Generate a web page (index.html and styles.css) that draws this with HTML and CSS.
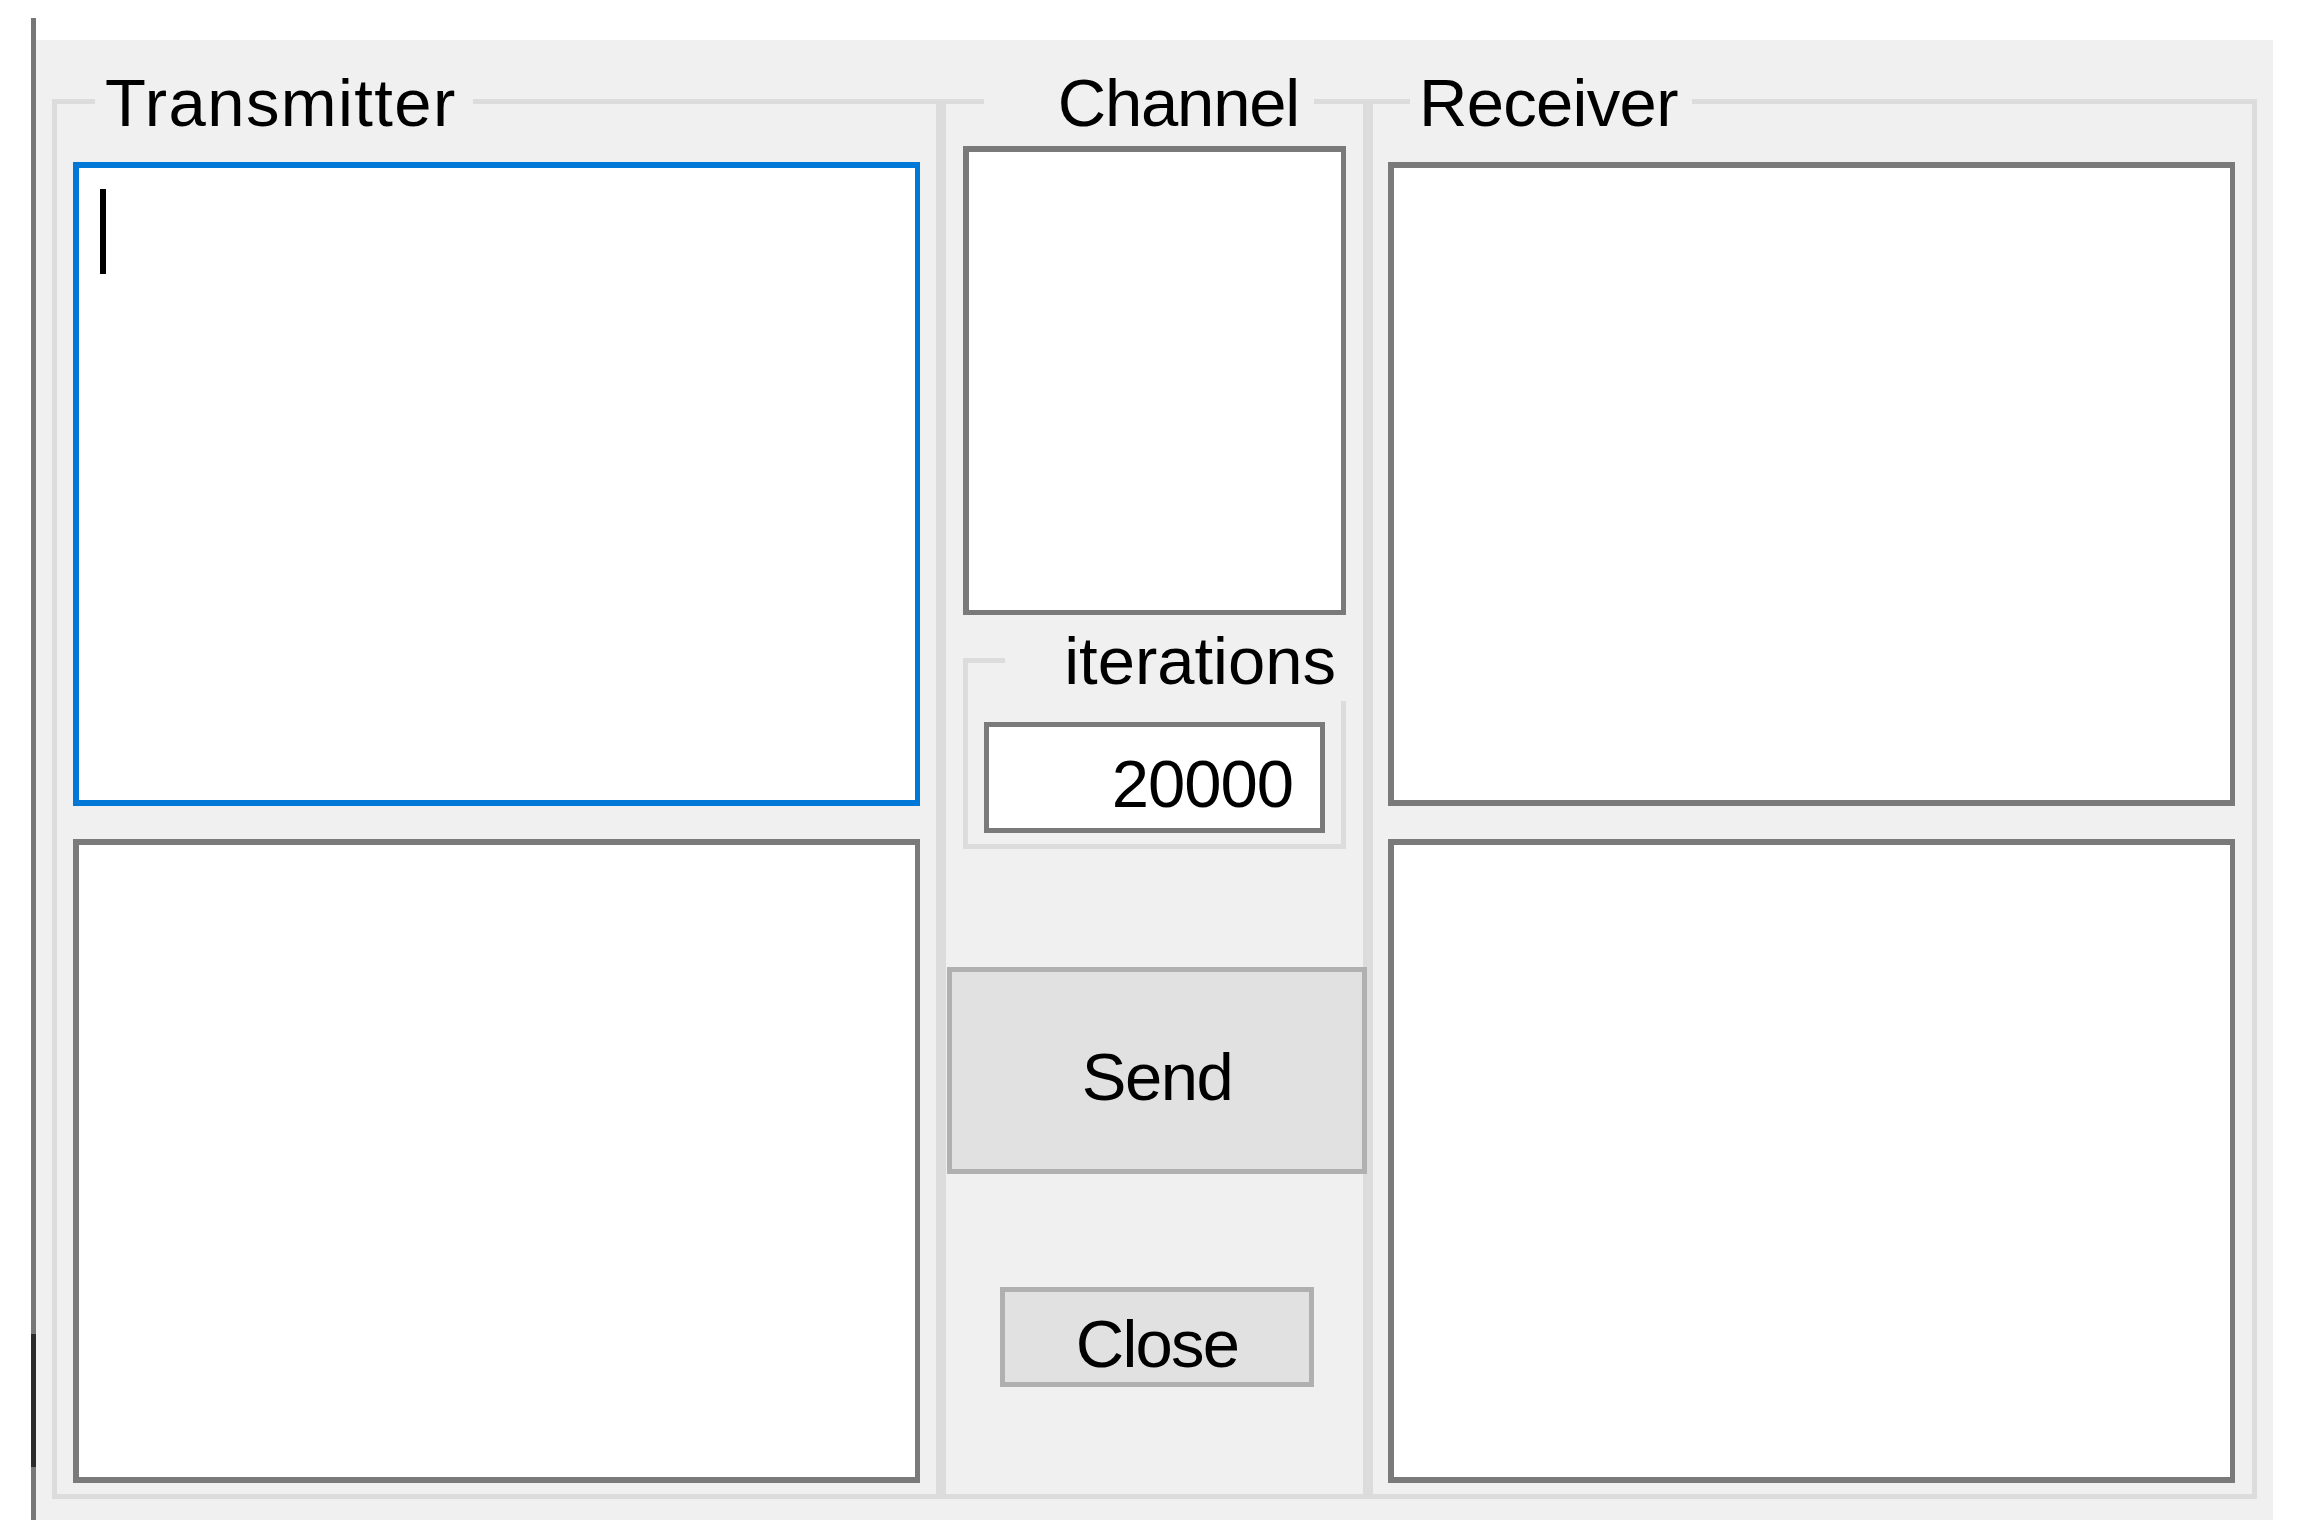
FILE: index.html
```html
<!DOCTYPE html>
<html lang="en">
<head>
<meta charset="utf-8">
<title>Transmitter / Channel / Receiver</title>
<link rel="stylesheet" href="styles.css">
</head>
<body>
<div class="screen">
  <div class="edge"></div>
  <div class="window">
    <section class="group group-tx">
      <div class="caption caption-tx">Transmitter</div>
      <div class="textbox textbox-focus"><span class="caret"></span></div>
      <div class="textbox"></div>
    </section>
    <section class="group group-ch">
      <div class="caption caption-ch">Channel</div>
      <div class="textbox channel-box"></div>
      <div class="group iter-group">
        <div class="caption caption-iter">iterations</div>
        <div class="iter-input">20000</div>
      </div>
      <div class="button send-btn">Send</div>
      <div class="button close-btn">Close</div>
    </section>
    <section class="group group-rx">
      <div class="caption caption-rx">Receiver</div>
      <div class="textbox"></div>
      <div class="textbox"></div>
    </section>
  </div>
</div>
</body>
</html>
```
FILE: styles.css
```css
html, body {
  margin: 0;
  padding: 0;
  background: #ffffff;
}

body {
  font-family: "Liberation Sans", Arial, sans-serif;
  font-size: 67px;
  line-height: 67px;
  color: #000000;
}

.screen {
  display: flex;
  align-items: flex-start;
  padding: 18px 0 0 31px;
}

.edge {
  width: 5px;
  height: 1502px;
  background: linear-gradient(to bottom,
    #777777 0, #777777 1316px,
    #2b2b2b 1316px, #2b2b2b 1449px,
    #777777 1449px, #777777 100%);
}

.window {
  margin-top: 22px;
  width: 2237px;
  height: 1480px;
  box-sizing: border-box;
  padding: 59px 16px 21px 16px;
  background: #f0f0f0;
  display: flex;
}

.group {
  position: relative;
  box-sizing: border-box;
  border: 5px solid #dcdcdc;
}

.group-tx,
.group-rx {
  width: 889px;
  height: 1400px;
  display: flex;
  flex-direction: column;
  gap: 33px;
}

.group-tx {
  padding: 58px 16px 11px 16px;
}

.group-rx {
  padding: 58px 17px 11px 15px;
}

.group-ch {
  width: 427px;
  height: 1400px;
  display: flex;
  flex-direction: column;
  align-items: flex-start;
  padding-top: 42px;
}

.caption {
  position: absolute;
  top: -35px;
  box-sizing: border-box;
  background: #f0f0f0;
  white-space: nowrap;
  font-size: 67px;
  line-height: 67px;
}

.caption-tx {
  left: 38px;
  width: 378px;
  padding-left: 10px;
  letter-spacing: 1.4px;
}

.caption-ch {
  left: 38px;
  width: 330px;
  padding-right: 15px;
  text-align: right;
  letter-spacing: -1.2px;
}

.caption-rx {
  left: 37px;
  width: 282px;
  padding-left: 9px;
  letter-spacing: -0.7px;
}

.textbox {
  box-sizing: border-box;
  flex: 1;
  background: #ffffff;
  border-style: solid;
  border-color: #7a7a7a;
  border-width: 6px 5px 6px 6px;
}

.textbox-focus {
  border-color: #0078d7;
}

.caret {
  display: block;
  width: 6px;
  height: 85px;
  margin: 21px 0 0 21px;
  background: #000000;
}

.channel-box {
  flex: none;
  margin-left: 17px;
  width: 383px;
  height: 469px;
  border-width: 6px 5px 5px 6px;
}

.iter-group {
  margin-top: 43px;
  margin-left: 17px;
  width: 383px;
  height: 191px;
  padding: 59px 0 0 16px;
}

.caption-iter {
  top: -36px;
  left: 37px;
  right: -5px;
  padding: 0 10px 7px 0;
  text-align: right;
}

.iter-input {
  box-sizing: border-box;
  width: 341px;
  height: 111px;
  border: 5px solid #7a7a7a;
  background: #ffffff;
  padding: 23px 27px 0 0;
  text-align: right;
  letter-spacing: -1px;
}

.button {
  box-sizing: border-box;
  display: flex;
  align-items: center;
  justify-content: center;
  background: #e1e1e1;
  border: 5px solid #b0b0b0;
  padding-top: 12px;
}

.send-btn {
  margin-top: 118px;
  margin-left: 1px;
  width: 420px;
  height: 207px;
  letter-spacing: -1.5px;
}

.close-btn {
  margin-top: 113px;
  margin-left: 54px;
  width: 314px;
  height: 100px;
  letter-spacing: -1.8px;
}
```
